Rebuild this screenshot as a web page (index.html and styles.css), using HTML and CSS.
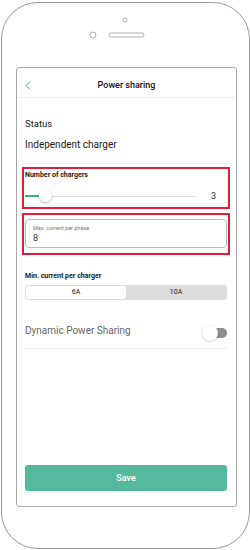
FILE: index.html
```html
<!DOCTYPE html>
<html>
<head>
<meta charset="utf-8">
<link rel="stylesheet" href="styles.css">
</head>
<body>
<div class="phone">
  <div class="phone-top">
    <svg width="246" height="64" viewBox="0 0 246 64">
      <circle cx="123" cy="17" r="2" fill="none" stroke="#999" stroke-width="0.8"/>
      <circle cx="91" cy="32" r="3" fill="none" stroke="#999" stroke-width="0.8"/>
      <rect x="107" y="30" width="35" height="4" rx="2" fill="none" stroke="#999" stroke-width="0.8"/>
    </svg>
  </div>
  <div class="screen">
    <div class="header">
      <svg class="back" width="6" height="9" viewBox="0 0 6 9"><path d="M5 0.5 L1 4.5 L5 8.5" fill="none" stroke="#3db08f" stroke-width="1"/></svg>
      <div class="title">Power sharing</div>
    </div>
    <div class="content">
      <div class="status">Status</div>
      <div class="mode">Independent charger</div>
      <div class="divider"></div>
      <div class="highlight hl-first">
        <div class="label">Number of chargers</div>
        <div class="slider-row">
          <div class="slider">
            <div class="slider-fill" style="width:14px"></div>
            <div class="slider-thumb" style="left:14px"></div>
          </div>
          <div class="slider-value">3</div>
        </div>
      </div>
      <div class="highlight hl-second">
        <div class="input">
          <div class="input-label">Max. current per phase</div>
          <div class="input-value">8</div>
        </div>
      </div>
      <div class="label label-min">Min. current per charger</div>
      <div class="segmented">
        <div class="seg seg-active">6A</div>
        <div class="seg">10A</div>
      </div>
      <div class="toggle-row">
        <div class="toggle-label">Dynamic Power Sharing</div>
        <div class="toggle"><div class="toggle-knob"></div></div>
      </div>
      <div class="divider divider-last"></div>
    </div>
    <div class="spacer"></div>
    <div class="save">Save</div>
  </div>
</div>
</body>
</html>
```
FILE: styles.css
```css
* { box-sizing: border-box; }
html, body { margin: 0; padding: 0; background: #fff; }
body { font-family: Roboto, "Liberation Sans", Arial, sans-serif; color: #222; }
.phone {
  margin: 2px 0 0 1px;
  width: 249px;
  height: 547px;
  border: 1px solid #9a9a9a;
  border-radius: 37px;
  padding: 0 11px 0 14px;
  display: flex;
  flex-direction: column;
}
.phone-top { height: 64px; margin-left: -14px; margin-right: -11px; }
.phone-top svg { display: block; }
.screen {
  width: 221px;
  height: 440px;
  border: 1px solid #a8a8a8;
  border-radius: 3px;
  display: flex;
  flex-direction: column;
}
.header {
  position: relative;
  height: 30px;
  border-bottom: 1px solid #eeeeee;
  padding-top: 11px;
}
.back { position: absolute; left: 8px; top: 13px; }
.title { text-align: center; font-size: 9px; font-weight: 500; line-height: 12px; color: #111; }
.content { padding: 19px 9px 0 8px; }
.status { font-size: 9.5px; line-height: 14px; color: #222; }
.mode { font-size: 10px; line-height: 14px; margin-top: 7px; color: #222; }
.divider { height: 1px; background: #eeeeee; margin-top: 11px; }
.highlight {
  border: 2px solid #e31c3d;
  margin: 0 -3px;
  padding: 0 1px;
}
.hl-first { margin-top: 3px; height: 42px; padding-top: 1px; }
.hl-second { margin-top: 4px; height: 42px; padding-top: 4px; }
.label { font-size: 7px; font-weight: 700; line-height: 10px; color: #222; }
.slider-row { display: flex; align-items: center; height: 16px; margin-top: 8px; }
.slider { position: relative; width: 171px; height: 1px; background: #dddddd; }
.slider-fill { position: absolute; left: 0; top: -0.5px; height: 2px; background: #3db08f; }
.slider-thumb {
  position: absolute; top: -6.5px; width: 13px; height: 13px; margin-left: 0;
  border-radius: 50%; background: #fff; box-shadow: 0 1px 2.5px rgba(0,0,0,0.3);
}
.slider-value { margin-left: 15px; font-size: 9px; color: #333; }
.input {
  height: 29px;
  border: 1px solid #bdbdbd;
  border-radius: 4px;
  padding: 4px 0 0 7px;
}
.input-label { font-size: 5.5px; line-height: 8px; color: #777; }
.input-value { font-size: 9px; line-height: 10px; margin-top: 1px; color: #333; }
.label-min { margin-top: 16px; }
.segmented {
  margin-top: 4px;
  height: 15px;
  display: flex;
  background: #dcdcdc;
  border-radius: 3px;
  border: 1px solid #dcdcdc;
}
.seg { flex: 1; text-align: center; font-size: 7px; line-height: 13px; color: #222; }
.seg-active { background: #fff; border-radius: 2.5px; }
.toggle-row { display: flex; align-items: center; justify-content: space-between; height: 20px; margin-top: 20px; }
.toggle-label { font-size: 10px; color: #666; }
.toggle {
  position: relative; width: 24px; height: 10px; margin-top: 6px;
  background: #8c8c8c; border-radius: 5px;
}
.toggle-knob {
  position: absolute; left: -1px; top: -3.5px; width: 16px; height: 16px; border-radius: 50%;
  background: #fff; box-shadow: 0 0.5px 2px rgba(0,0,0,0.25);
}
.divider-last { margin-top: 8px; }
.spacer { flex: 1; }
.save {
  margin: 0 9px 15px 8px;
  height: 26px;
  background: #55b99d;
  border-radius: 3px;
  color: #fff;
  font-size: 9px;
  font-weight: 500;
  line-height: 26px;
  text-align: center;
}
```
